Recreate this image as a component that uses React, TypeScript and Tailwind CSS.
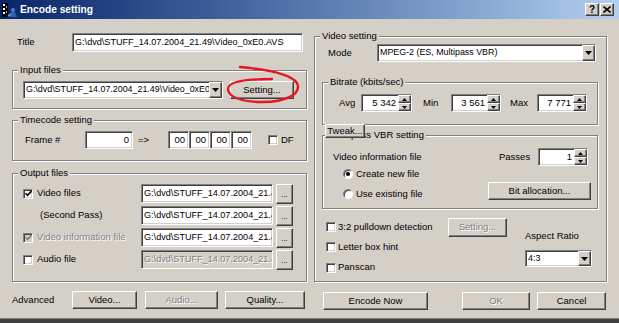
import React from "react";

const sunken =
  "border border-t-[#808080] border-l-[#808080] border-b-white border-r-white shadow-[inset_1px_1px_0_#404040,inset_-1px_-1px_0_#d4d0c8]";
const raised =
  "border border-t-white border-l-white border-b-[#404040] border-r-[#404040] shadow-[inset_-1px_-1px_0_#808080] bg-[#d4d0c8]";
const disabledText = "text-[#808080] [text-shadow:1px_1px_0_#ffffff]";

const PATH = "G:\\dvd\\STUFF_14.07.2004_21.49\\Video_0xE0.AVS";

function Btn({
  children,
  className = "",
  disabled = false,
}: {
  children: React.ReactNode;
  className?: string;
  disabled?: boolean;
}) {
  return (
    <div
      className={`${raised} flex items-center justify-center whitespace-nowrap ${
        disabled ? disabledText : "text-black"
      } ${className}`}
    >
      {children}
    </div>
  );
}

function Tri({ up = false }: { up?: boolean }) {
  return (
    <svg width="7" height="4" viewBox="0 0 7 4">
      {up ? (
        <polygon points="0,4 7,4 3.5,0" fill="#000" />
      ) : (
        <polygon points="0,0 7,0 3.5,4" fill="#000" />
      )}
    </svg>
  );
}

function SmallTri({ up = false }: { up?: boolean }) {
  return (
    <svg width="5" height="3" viewBox="0 0 5 3">
      {up ? (
        <polygon points="0,3 5,3 2.5,0" fill="#000" />
      ) : (
        <polygon points="0,0 5,0 2.5,3" fill="#000" />
      )}
    </svg>
  );
}

function Combo({ text, className = "" }: { text: string; className?: string }) {
  return (
    <div className={`flex bg-white ${sunken} ${className}`}>
      <span className="flex-1 overflow-hidden whitespace-nowrap flex items-center pl-[2px] text-[8.9px]">
        {text}
      </span>
      <div className={`w-[13px] ${raised} flex items-center justify-center`}>
        <Tri />
      </div>
    </div>
  );
}

function Spin({ value, className = "" }: { value: string; className?: string }) {
  return (
    <div className={`flex bg-white h-[18px] ${sunken} ${className}`}>
      <span className="flex-1 flex items-center justify-end pr-[2px]">{value}</span>
      <div className="flex flex-col w-[13px]">
        <div className={`flex-1 ${raised} flex items-center justify-center`}>
          <SmallTri up />
        </div>
        <div className={`flex-1 ${raised} flex items-center justify-center`}>
          <SmallTri />
        </div>
      </div>
    </div>
  );
}

function Check({
  checked = false,
  disabled = false,
  className = "",
}: {
  checked?: boolean;
  disabled?: boolean;
  className?: string;
}) {
  return (
    <span
      className={`w-[10px] h-[10px] shrink-0 flex items-center justify-center ${sunken} ${
        disabled ? "bg-[#d4d0c8]" : "bg-white"
      } ${className}`}
    >
      {checked && (
        <svg width="7" height="7" viewBox="0 0 7 7">
          <polyline
            points="0.5,3.2 2.6,5.4 6.5,1"
            fill="none"
            stroke={disabled ? "#808080" : "#000"}
            strokeWidth="1.6"
          />
        </svg>
      )}
    </span>
  );
}

function Radio({ on = false, className = "" }: { on?: boolean; className?: string }) {
  return (
    <span
      className={`w-[10px] h-[10px] shrink-0 rounded-full bg-white border border-t-[#808080] border-l-[#808080] border-b-white border-r-white shadow-[inset_1px_1px_0_#404040] flex items-center justify-center ${className}`}
    >
      {on && <span className="w-[4px] h-[4px] rounded-full bg-black" />}
    </span>
  );
}

function GroupBox({
  label,
  className = "",
  legendClass = "ml-[5px]",
  children,
}: {
  label: string;
  className?: string;
  legendClass?: string;
  children: React.ReactNode;
}) {
  return (
    <fieldset
      className={`border border-[#808080] shadow-[1px_1px_0_#ffffff,inset_1px_1px_0_#ffffff] ${className}`}
    >
      <legend className={`px-[2px] h-[12px] leading-[12px] bg-[#d4d0c8] ${legendClass}`}>
        {label}
      </legend>
      {children}
    </fieldset>
  );
}

function TextBox({
  value,
  className = "",
  disabled = false,
}: {
  value: string;
  className?: string;
  disabled?: boolean;
}) {
  return (
    <div
      className={`${sunken} ${
        disabled ? "bg-[#d4d0c8] " + disabledText : "bg-white"
      } flex items-center pl-[2px] overflow-hidden whitespace-nowrap text-[9.1px] ${className}`}
    >
      {value}
    </div>
  );
}

function Dots() {
  return (
    <Btn className="ml-[3px] w-[17px] h-[20px] self-start items-end pb-[4px] text-[8px] leading-none">
      ...
    </Btn>
  );
}

function AppIcon() {
  return (
    <svg width="16" height="16" viewBox="0 0 16 16">
      <rect x="0" y="1" width="6" height="14" fill="#000" />
      <rect x="1" y="2" width="2" height="2" fill="#fff" />
      <rect x="1" y="6" width="2" height="2" fill="#fff" />
      <rect x="1" y="10" width="2" height="2" fill="#fff" />
      <rect x="4" y="4" width="1" height="2" fill="#c0c0c0" />
      <rect x="4" y="9" width="1" height="2" fill="#c0c0c0" />
      <circle cx="11" cy="8" r="2" fill="#4a7fd0" />
      <path d="M7 15 L9 10 L13 10 L15 15 Z" fill="#2b5fb8" />
      <path d="M9 12 L6 14" stroke="#7fa7e8" strokeWidth="1.5" />
    </svg>
  );
}

export default function App() {
  return (
    <div className="w-[619px] h-[323px] bg-[#d4d0c8] overflow-hidden relative flex flex-col font-['Liberation_Sans',Arial,sans-serif] text-[9.5px] text-black">
      {/* Title bar */}
      <div className="h-[19px] shrink-0 flex items-center bg-linear-to-r from-[#0a246a] to-[#b3cff0]">
        <div className="ml-[2px] w-[16px] h-[16px]">
          <AppIcon />
        </div>
        <span className="ml-[2px] text-white font-bold text-[10.2px]">Encode setting</span>
        <div className="ml-auto mr-[5px] flex">
          <div className={`${raised} w-[14px] h-[13px] flex items-center justify-center font-bold text-[10px]`}>
            ?
          </div>
          <div className={`${raised} w-[14px] h-[13px] flex items-center justify-center ml-[1px]`}>
            <svg width="8" height="7" viewBox="0 0 8 7">
              <path d="M0.5 0.5 L7.5 6.5 M7.5 0.5 L0.5 6.5" stroke="#000" strokeWidth="1.6" />
            </svg>
          </div>
        </div>
      </div>

      {/* Body */}
      <div className="flex flex-1">
        {/* Left column */}
        <div className="flex flex-col w-[295px] ml-[12px]">
          <div className="flex items-center mt-[14px] h-[19px]">
            <span className="ml-[5px] w-[55px]">Title</span>
            <TextBox value={PATH} className="w-[231px] h-[19px]" />
          </div>

          <GroupBox label="Input files" className="mt-[12px]">
            <div className="flex items-center pt-[5px] pb-[9px]">
              <Combo text={PATH} className="ml-[10px] w-[200px] h-[18px]" />
              <Btn className="ml-[7px] w-[64px] h-[18px]">Setting...</Btn>
            </div>
          </GroupBox>

          <GroupBox label="Timecode setting" className="mt-[5px]">
            <div className="flex items-center pt-[5px] pb-[11px]">
              <span className="ml-[12px] w-[60px]">Frame #</span>
              <div className={`${sunken} bg-white w-[48px] h-[18px] flex items-center justify-end pr-[3px]`}>0</div>
              <span className="ml-[5px] w-[30px]">=&gt;</span>
              <div className="flex">
                <div className={`${sunken} bg-white w-[21px] h-[18px] flex items-center justify-end pr-[3px]`}>00</div>
                <div className={`${sunken} bg-white w-[21px] h-[18px] flex items-center justify-end pr-[3px]`}>00</div>
                <div className={`${sunken} bg-white w-[21px] h-[18px] flex items-center justify-end pr-[3px]`}>00</div>
                <div className={`${sunken} bg-white w-[21px] h-[18px] flex items-center justify-end pr-[3px]`}>00</div>
              </div>
              <Check className="ml-[16px]" />
              <span className="ml-[3px]">DF</span>
            </div>
          </GroupBox>

          <GroupBox label="Output files" className="mt-[6px]">
            <div className="flex flex-col gap-[3px] pt-[5px] pb-[12px]">
              <div className="flex items-center h-[19px]">
                <div className="w-[128px] flex items-center">
                  <Check checked className="ml-[10px]" />
                  <span className="ml-[4px]">Video files</span>
                </div>
                <TextBox value={PATH} className="w-[132px] h-[19px]" />
                <Dots />
              </div>
              <div className="flex items-center h-[19px]">
                <div className="w-[128px] flex items-center">
                  <span className="ml-[27px]">(Second Pass)</span>
                </div>
                <TextBox value={PATH} className="w-[132px] h-[19px]" />
                <Dots />
              </div>
              <div className="flex items-center h-[19px]">
                <div className="w-[128px] flex items-center">
                  <Check checked disabled className="ml-[10px]" />
                  <span className={`ml-[4px] ${disabledText}`}>Video information file</span>
                </div>
                <TextBox value={PATH} className="w-[132px] h-[19px]" />
                <Dots />
              </div>
              <div className="flex items-center h-[19px]">
                <div className="w-[128px] flex items-center">
                  <Check className="ml-[10px]" />
                  <span className="ml-[4px]">Audio file</span>
                </div>
                <TextBox value={PATH} disabled className="w-[132px] h-[19px]" />
                <Dots />
              </div>
            </div>
          </GroupBox>

          <div className="flex items-center mt-[9px] h-[18px]">
            <span className="w-[60px]">Advanced</span>
            <Btn className="w-[65px] h-[18px]">Video...</Btn>
            <Btn disabled className="ml-[8px] w-[73px] h-[18px]">Audio...</Btn>
            <Btn className="ml-[7px] w-[80px] h-[18px]">Quality...</Btn>
          </div>
        </div>

        {/* Right column */}
        <div className="flex flex-col ml-[7px] w-[293px]">
          <GroupBox label="Video setting" className="mt-[11px]">
            <div className="flex items-center pt-[2px]">
              <span className="ml-[13px] w-[49px]">Mode</span>
              <Combo text="MPEG-2 (ES, Multipass VBR)" className="w-[219px] h-[18px]" />
            </div>

            <GroupBox label="Bitrate (kbits/sec)" className="mt-[14px] ml-[7px] w-[276px]">
              <div className="flex items-center pt-[6px] pb-[12px]">
                <span className="ml-[16px] w-[22px]">Avg</span>
                <Spin value="5 342" className="w-[51px]" />
                <span className="ml-[11px] w-[28px]">Min</span>
                <Spin value="3 561" className="w-[50px]" />
                <span className="ml-[9px] w-[27px]">Max</span>
                <Spin value="7 771" className="w-[50px]" />
              </div>
            </GroupBox>

            <div className="relative mt-[4px] ml-[7px] w-[276px]">
              <GroupBox label="Multipass VBR setting" legendClass="ml-[6px]">
                <div className="flex items-center h-[18px] mt-[7px]">
                  <span className="ml-[10px]">Video information file</span>
                  <span className="ml-auto w-[39px]">Passes</span>
                  <Spin value="1" className="w-[50px] mr-[9px]" />
                </div>
                <div className="flex -mt-[2px] pb-[4px]">
                  <div className="flex flex-col">
                    <div className="flex items-center h-[20px]">
                      <Radio on className="ml-[20px]" />
                      <span className="ml-[3px]">Create new file</span>
                    </div>
                    <div className="flex items-center h-[20px]">
                      <Radio className="ml-[20px]" />
                      <span className="ml-[3px]">Use existing file</span>
                    </div>
                  </div>
                  <Btn className="ml-auto mr-[6px] mt-[18px] w-[103px] h-[18px]">Bit allocation...</Btn>
                </div>
              </GroupBox>
              <Btn className="absolute left-[3px] top-[-5px] w-[40px] h-[14px]">Tweak...</Btn>
            </div>

            <div className="flex mt-[8px] pb-[3px]">
              <div className="flex flex-col ml-[11px] w-[122px]">
                <div className="flex items-center h-[20px]">
                  <Check />
                  <span className="ml-[2px]">3:2 pulldown detection</span>
                </div>
                <div className="flex items-center h-[20px]">
                  <Check />
                  <span className="ml-[2px]">Letter box hint</span>
                </div>
                <div className="flex items-center h-[21px]">
                  <Check />
                  <span className="ml-[2px]">Panscan</span>
                </div>
              </div>
              <Btn disabled className="mt-[1px] w-[59px] h-[19px]">Setting...</Btn>
              <div className="flex flex-col ml-[18px] mt-[13px]">
                <span className="h-[12px] leading-[12px]">Aspect Ratio</span>
                <Combo text="4:3" className="mt-[8px] w-[67px] h-[17px]" />
              </div>
            </div>
          </GroupBox>

          <div className="flex items-center mt-[10px] h-[18px]">
            <Btn className="ml-[9px] w-[105px] h-[18px]">Encode Now</Btn>
            <Btn disabled className="ml-[34px] w-[68px] h-[18px]">OK</Btn>
            <Btn className="ml-[7px] w-[69px] h-[18px]">Cancel</Btn>
          </div>
        </div>
      </div>

      {/* bottom frame */}
      <div className="h-[1px] bg-[#808080] shrink-0" />
      <div className="h-[4px] bg-[#404040] shrink-0" />

      {/* Red hand-drawn circle */}
      <svg
        className="absolute left-0 top-0 pointer-events-none"
        width="619"
        height="323"
        viewBox="0 0 619 323"
      >
        <path
          d="M240 67 C262 69, 290 73, 297 83 C302 94, 286 102, 262 102 C242 102, 228 97, 228 89 C228 82, 245 79, 272 79"
          fill="none"
          stroke="#e8141e"
          strokeWidth="2.3"
          strokeLinecap="round"
        />
      </svg>
    </div>
  );
}
